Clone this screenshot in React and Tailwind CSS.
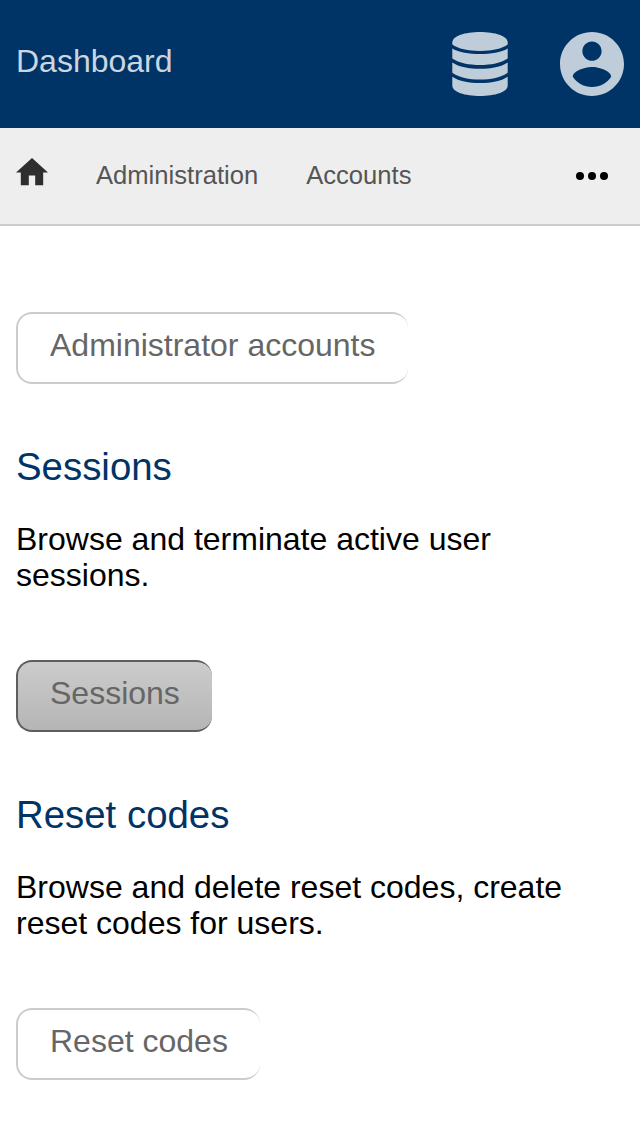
function DatabaseIcon() {
  return (
    <svg className="h-16 w-14" viewBox="0 0 56 64" fill="currentColor" aria-hidden="true">
      <path d="M0.3 10.500C0.3 4 13 0 28 0S55.700 4 55.700 10.500V12.600C50 17 40 19 28 19S6 17 0.300 12.600Z" />
      <path d="M0.300 16.500C7 20.500 17 22 28 22S49 20.500 55.700 16.500V26.500C49 31 39 33 28 33S7 31 0.300 26.500Z" />
      <path d="M0.300 30.500C7 35 17 36.800 28 36.800S49 35 55.700 30.500V40.700C49 45.500 39 47.500 28 47.500S7 45.500 0.300 40.700Z" />
      <path d="M0.300 44.700C7 49.300 17 51 28 51S49 49.300 55.700 44.700V53.500C55.700 60 43 64 28 64S0.300 60 0.300 53.500Z" />
    </svg>
  );
}

function AccountIcon() {
  return (
    <svg className="size-16" viewBox="2 2 20 20" fill="currentColor" aria-hidden="true">
      <path d="M12 2C6.480 2 2 6.480 2 12s4.480 10 10 10 10-4.480 10-10S17.520 2 12 2zm0 3c1.660 0 3 1.340 3 3s-1.340 3-3 3-3-1.340-3-3 1.340-3 3-3zm0 14.200c-2.500 0-4.710-1.280-6-3.220.030-1.990 4-3.080 6-3.080 1.990 0 5.970 1.090 6 3.080-1.290 1.940-3.500 3.220-6 3.220z" />
    </svg>
  );
}

function Button({ children, active = false }) {
  const look = active
    ? "border-[#5e5e5e] bg-linear-to-b from-[#cccccc] to-[#b5b5b5]"
    : "border-[#cccccc] bg-white";
  return (
    <button
      className={`block h-[72px] rounded-2xl border-2 border-r-0 pr-[32.4px] pb-1.5 pl-8 text-[32px] leading-9 whitespace-nowrap text-[#666666] ${look}`}
    >
      {children}
    </button>
  );
}

function Section({ title, text, children }) {
  return (
    <section className="pt-[59px]">
      <h2 className="text-[38.4px] leading-12 text-[#003366]">{title}</h2>
      <p className="mt-[30px] mb-[67px] text-[32px] leading-9 text-black">{text}</p>
      {children}
    </section>
  );
}

export default function App() {
  return (
    <div className="h-[1136px] overflow-hidden bg-white font-['Liberation_Sans',Arial,sans-serif]">
      <header className="flex h-32 items-center justify-between bg-[#003366] px-4 text-[#bfccd9]">
        <h1 className="pb-1.5 text-[32px] leading-9 text-[#ccd6e0]">Dashboard</h1>
        <div className="flex items-center gap-[52px]">
          <DatabaseIcon />
          <AccountIcon />
        </div>
      </header>
      <nav className="flex h-[98px] items-center border-b-2 border-[#cccccc] bg-[#eeeeee] px-4 text-[25.6px] leading-8 text-[#555555]">
        <svg className="mb-2 h-[27.2px] w-8 text-[#2e2e2e]" viewBox="2 3 20 17" fill="currentColor" aria-hidden="true">
          <path d="M10 20v-6h4v6h5v-8h3L12 3 2 12h3v8z" />
        </svg>
        <a className="ml-12 pb-0.5">Administration</a>
        <a className="ml-12 pb-0.5">Accounts</a>
        <svg className="mr-4 ml-auto h-2 w-8 text-black" viewBox="0 0 32 8" fill="currentColor" aria-hidden="true">
          <circle cx="4" cy="4" r="4" />
          <circle cx="16" cy="4" r="4" />
          <circle cx="28" cy="4" r="4" />
        </svg>
      </nav>
      <main className="px-4 pt-[86px]">
        <Button>Administrator accounts</Button>
        <Section title="Sessions" text="Browse and terminate active user sessions.">
          <Button active>Sessions</Button>
        </Section>
        <Section title="Reset codes" text="Browse and delete reset codes, create reset codes for users.">
          <Button>Reset codes</Button>
        </Section>
      </main>
    </div>
  );
}
